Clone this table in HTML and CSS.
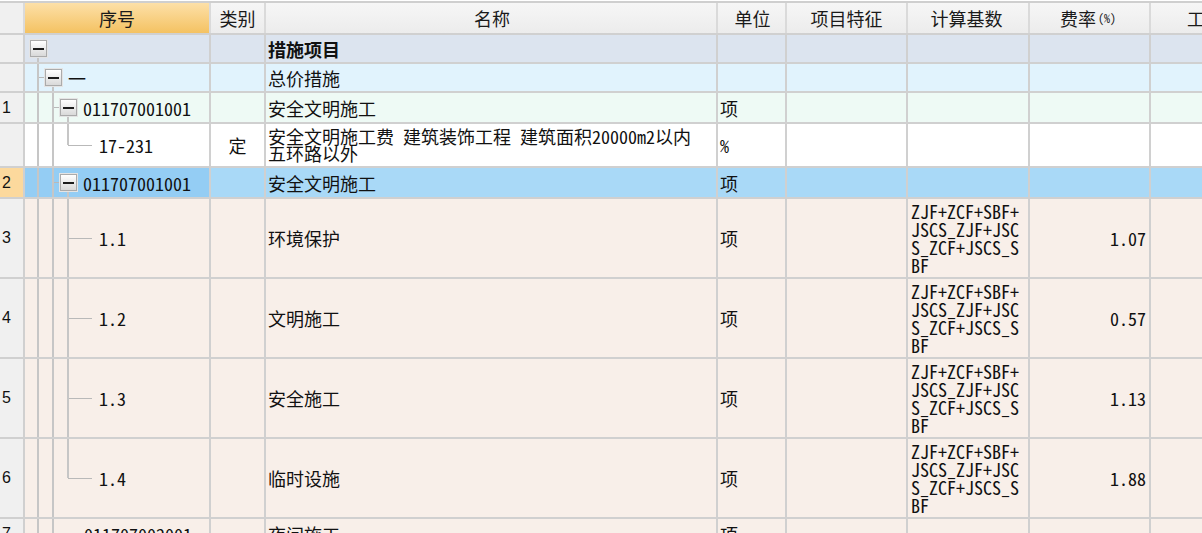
FILE: index.html
```html
<!DOCTYPE html>
<html lang="zh-CN">
<head>
<meta charset="utf-8">
<title>措施项目</title>
<link rel="stylesheet" href="styles.css">
</head>
<body>
<div class="sheet">
  <div class="row hdr">
    <div class="c num"></div>
    <div class="c seq hl">序号</div>
    <div class="c cat">类别</div>
    <div class="c name">名称</div>
    <div class="c unit">单位</div>
    <div class="c feat">项目特征</div>
    <div class="c base">计算基数</div>
    <div class="c rate">费率<small>(%)</small></div>
    <div class="c qty">工程量</div>
  </div>

  <div class="row r-top">
    <div class="c num"></div>
    <div class="c seq tree"><span class="slot box down"><i class="btn"></i></span></div>
    <div class="c cat"></div>
    <div class="c name"><b>措施项目</b></div>
    <div class="c unit"></div>
    <div class="c feat"></div>
    <div class="c base"></div>
    <div class="c rate"></div>
    <div class="c qty"></div>
  </div>

  <div class="row r-group">
    <div class="c num"></div>
    <div class="c seq tree"><span class="slot tee"></span><span class="slot box down"><i class="btn"></i></span><span class="txt">一</span></div>
    <div class="c cat"></div>
    <div class="c name">总价措施</div>
    <div class="c unit"></div>
    <div class="c feat"></div>
    <div class="c base"></div>
    <div class="c rate"></div>
    <div class="c qty"></div>
  </div>

  <div class="row r-item">
    <div class="c num">1</div>
    <div class="c seq tree"><span class="slot pipe"></span><span class="slot tee"></span><span class="slot box down"><i class="btn"></i></span><span class="txt">011707001001</span></div>
    <div class="c cat"></div>
    <div class="c name">安全文明施工</div>
    <div class="c unit">项</div>
    <div class="c feat"></div>
    <div class="c base"></div>
    <div class="c rate"></div>
    <div class="c qty"></div>
  </div>

  <div class="row r-quota">
    <div class="c num"></div>
    <div class="c seq tree"><span class="slot pipe"></span><span class="slot pipe"></span><span class="slot ell"></span><span class="stub"></span><span class="txt">17-231</span></div>
    <div class="c cat">定</div>
    <div class="c name">安全文明施工费 建筑装饰工程 建筑面积20000m2以内五环路以外</div>
    <div class="c unit">%</div>
    <div class="c feat"></div>
    <div class="c base"></div>
    <div class="c rate"></div>
    <div class="c qty"></div>
  </div>

  <div class="row r-sel">
    <div class="c num cur">2</div>
    <div class="c seq tree cur"><span class="slot pipe"></span><span class="slot tee"></span><span class="slot box down"><i class="btn"></i></span><span class="txt">011707001001</span></div>
    <div class="c cat"></div>
    <div class="c name">安全文明施工</div>
    <div class="c unit">项</div>
    <div class="c feat"></div>
    <div class="c base"></div>
    <div class="c rate"></div>
    <div class="c qty"></div>
  </div>

  <div class="row r-sub">
    <div class="c num">3</div>
    <div class="c seq tree"><span class="slot pipe"></span><span class="slot pipe"></span><span class="slot tee"></span><span class="stub"></span><span class="txt">1.1</span></div>
    <div class="c cat"></div>
    <div class="c name">环境保护</div>
    <div class="c unit">项</div>
    <div class="c feat"></div>
    <div class="c base">ZJF+ZCF+SBF+JSCS_ZJF+JSCS_ZCF+JSCS_SBF</div>
    <div class="c rate">1.07</div>
    <div class="c qty"></div>
  </div>

  <div class="row r-sub">
    <div class="c num">4</div>
    <div class="c seq tree"><span class="slot pipe"></span><span class="slot pipe"></span><span class="slot tee"></span><span class="stub"></span><span class="txt">1.2</span></div>
    <div class="c cat"></div>
    <div class="c name">文明施工</div>
    <div class="c unit">项</div>
    <div class="c feat"></div>
    <div class="c base">ZJF+ZCF+SBF+JSCS_ZJF+JSCS_ZCF+JSCS_SBF</div>
    <div class="c rate">0.57</div>
    <div class="c qty"></div>
  </div>

  <div class="row r-sub">
    <div class="c num">5</div>
    <div class="c seq tree"><span class="slot pipe"></span><span class="slot pipe"></span><span class="slot tee"></span><span class="stub"></span><span class="txt">1.3</span></div>
    <div class="c cat"></div>
    <div class="c name">安全施工</div>
    <div class="c unit">项</div>
    <div class="c feat"></div>
    <div class="c base">ZJF+ZCF+SBF+JSCS_ZJF+JSCS_ZCF+JSCS_SBF</div>
    <div class="c rate">1.13</div>
    <div class="c qty"></div>
  </div>

  <div class="row r-sub">
    <div class="c num">6</div>
    <div class="c seq tree"><span class="slot pipe"></span><span class="slot pipe"></span><span class="slot ell"></span><span class="stub"></span><span class="txt">1.4</span></div>
    <div class="c cat"></div>
    <div class="c name">临时设施</div>
    <div class="c unit">项</div>
    <div class="c feat"></div>
    <div class="c base">ZJF+ZCF+SBF+JSCS_ZJF+JSCS_ZCF+JSCS_SBF</div>
    <div class="c rate">1.88</div>
    <div class="c qty"></div>
  </div>

  <div class="row r-last">
    <div class="c num">7</div>
    <div class="c seq tree"><span class="slot pipe"></span><span class="slot tee"></span><span class="stub"></span><span class="txt">011707002001</span></div>
    <div class="c cat"></div>
    <div class="c name">夜间施工</div>
    <div class="c unit">项</div>
    <div class="c feat"></div>
    <div class="c base"></div>
    <div class="c rate"></div>
    <div class="c qty"></div>
  </div>
</div>
</body>
</html>
```

FILE: styles.css
```css
html, body {
  margin: 0;
  padding: 0;
  overflow: hidden;
  background: #ffffff;
}

body {
  font-family: "Noto Sans Mono CJK SC", "Noto Sans CJK SC", monospace;
  font-size: 18px;
  color: #111;
}

.sheet {
  width: 1277px;
  margin-top: 1px;
  border-top: 2px solid #cfcfcf;
}

.row {
  display: grid;
  grid-template-columns: 25px 186px 55px 452px 69px 121px 122px 121px 126px;
  box-sizing: border-box;
  border-bottom: 2px solid #d0d0d0;
  height: 29px;
}

.c {
  display: flex;
  align-items: center;
  box-sizing: border-box;
  border-right: 2px solid #d0d0d0;
  overflow: hidden;
  white-space: nowrap;
  line-height: 18px;
}

/* header */
.hdr { height: 32px; background: linear-gradient(#f6f6f6, #ececec); }
.hdr .c { justify-content: center; border-right-color: #dadada; color: #1a1a1a; }
.hdr .seq.hl { background: linear-gradient(#fde0a8, #f4c262); }
.hdr .rate small { font-size: 12px; margin-left: 2px; }
.hdr .qty { justify-content: flex-start; padding-left: 36px; }

/* row kinds */
.r-top { background: #dce4ef; height: 29px; }
.r-group { background: #e1f3fd; height: 29px; }
.r-item { background: #eefaf5; height: 31px; }
.r-quota { background: #ffffff; height: 44px; }
.r-sel { background: #a9d9f7; height: 31px; }
.r-sub { background: #f8efe9; height: 80px; }
.r-last { background: #f8efe9; height: 31px; }

.num {
  background: #f0f0f0;
  font-family: "Liberation Sans", Arial, sans-serif;
  font-size: 16px;
  padding-left: 2px;
}
.r-sel .num.cur { background: #fcd99d; }
.r-sel .seq.cur { background: #94cdf4; }

.cat { justify-content: center; }
.name { padding-left: 2px; }
.name b { font-weight: bold; }
.r-quota .name { white-space: normal; line-height: 17px; padding-right: 20px; }
.unit { padding-left: 2px; }
.base {
  white-space: normal;
  word-break: break-all;
  padding: 0 6px 0 3px;
}
.rate { justify-content: flex-end; padding-right: 3px; }

/* tree column */
.tree {
  align-items: stretch;
  padding-left: 6px;
}
.slot {
  flex: none;
  width: 15px;
  display: flex;
  align-items: center;
  justify-content: center;
  background-repeat: no-repeat;
}
.pipe {
  background-image: linear-gradient(#c6c6c6, #c6c6c6);
  background-size: 2px 100%;
  background-position: 6px 0;
}
.tee {
  background-image: linear-gradient(#c6c6c6, #c6c6c6), linear-gradient(#b9b9b9, #b9b9b9);
  background-size: 2px 100%, 8px 1px;
  background-position: 6px 0, 7px 50%;
}
.ell {
  background-image: linear-gradient(#c6c6c6, #c6c6c6), linear-gradient(#b9b9b9, #b9b9b9);
  background-size: 2px 50%, 8px 1px;
  background-position: 6px 0, 7px 50%;
}
.down {
  background-image: linear-gradient(#c6c6c6, #c6c6c6);
  background-size: 2px 50%;
  background-position: 6px 100%;
}
.stub {
  flex: none;
  width: 16px;
  background: linear-gradient(#b9b9b9, #b9b9b9) no-repeat 0 50% / 100% 1px;
}
.btn {
  flex: none;
  width: 17px;
  height: 17px;
  box-sizing: border-box;
  border: 1px solid #ababab;
  box-shadow: 0 0 0 1px #e4e4e4;
  background: linear-gradient(#ffffff, #d9d9d9);
  display: flex;
  align-items: center;
  justify-content: center;
}
.btn::before {
  content: "";
  width: 11px;
  height: 2px;
  background: #1c1c1c;
}
.txt {
  margin-left: 7px;
  align-self: center;
}
```
